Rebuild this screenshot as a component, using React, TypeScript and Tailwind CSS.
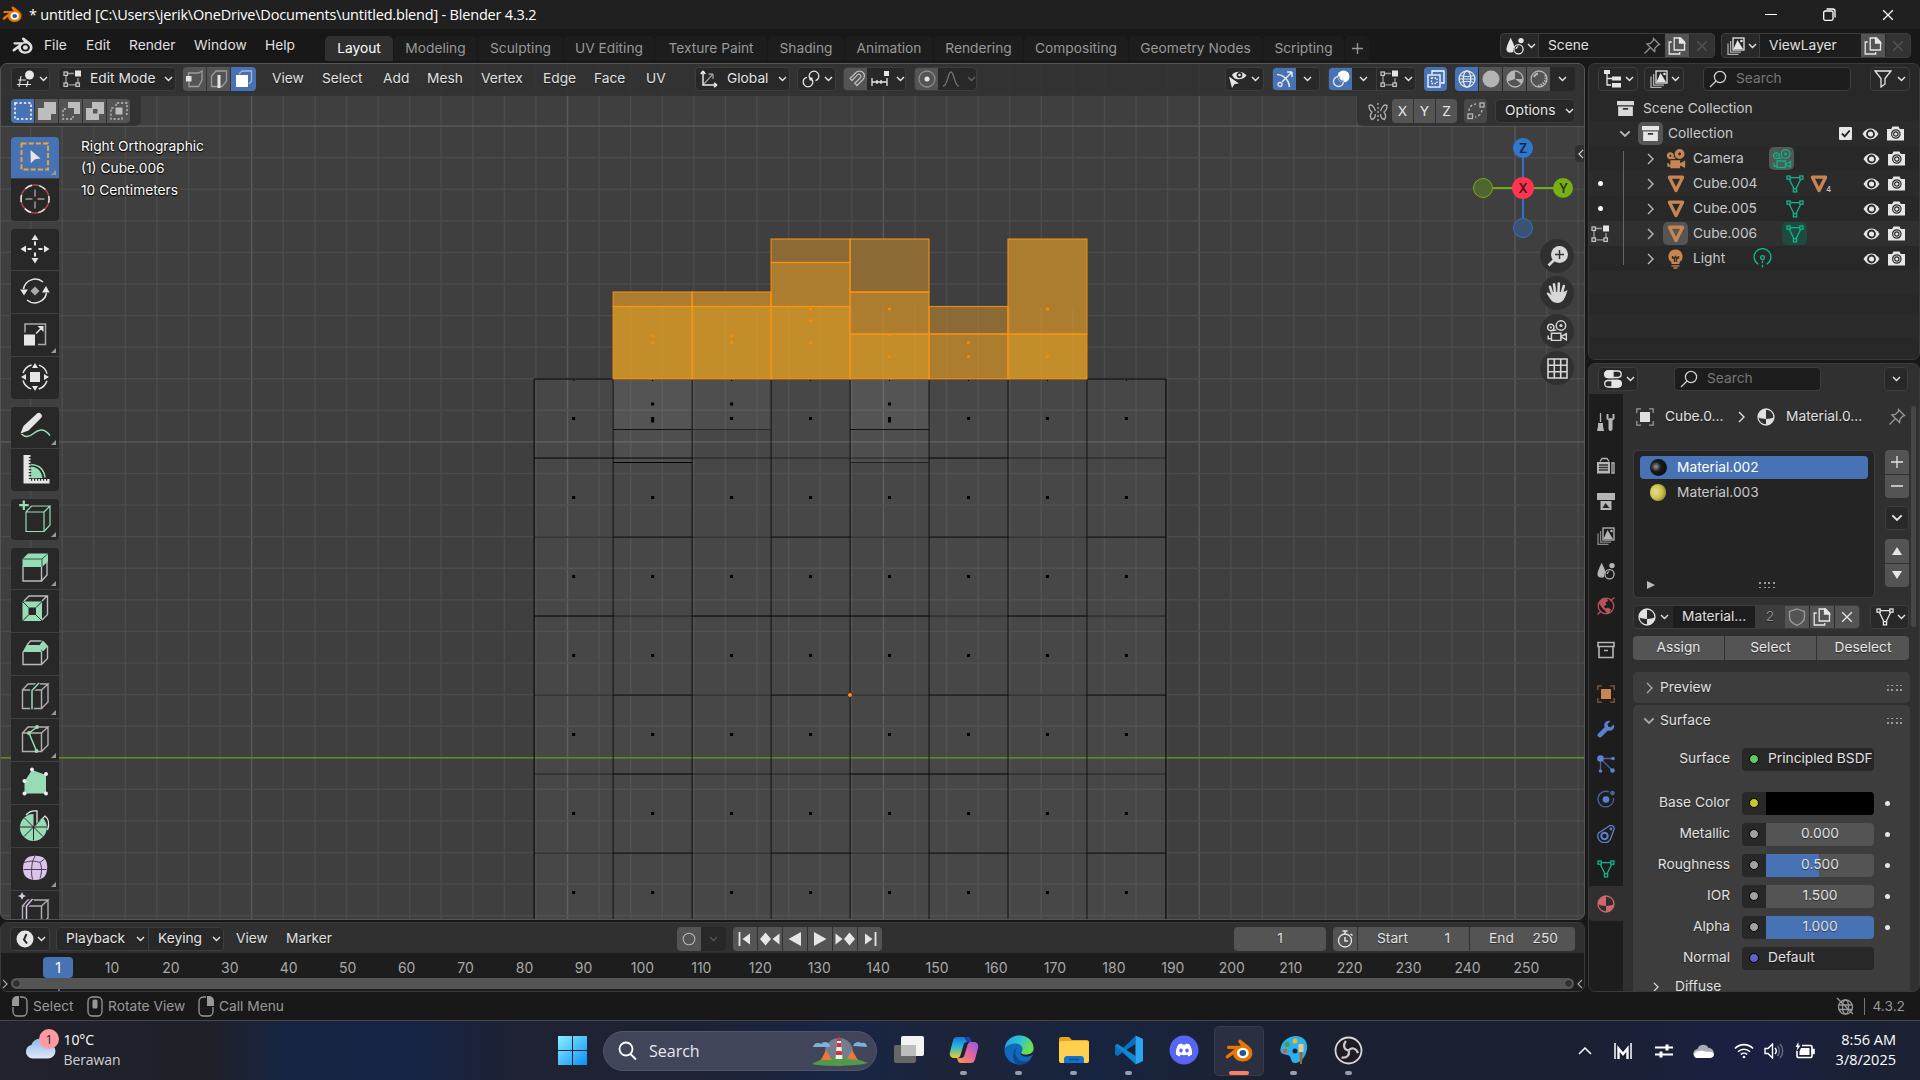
import React from "react";

type IconProps = { children: React.ReactNode; w?: number; h?: number; vb?: string; className?: string };

/* ---------- icon primitives ---------- */
const Icon = ({ children, w = 18, h, vb, className = "" }: IconProps) => (
  <svg
    width={w}
    height={h ?? w}
    viewBox={vb ?? `0 0 18 18`}
    fill="none"
    stroke="currentColor"
    strokeWidth="1.3"
    className={`shrink-0 ${className}`}
  >
    {children}
  </svg>
);

const Chev = ({ className = "" }: { className?: string }) => (
  <svg width="9" height="6" viewBox="0 0 9 6" fill="none" stroke="currentColor" strokeWidth="1.4" className={`shrink-0 ${className}`}>
    <path d="M1 1l3.5 3.5L8 1" />
  </svg>
);
const ChevRight = ({ className = "" }: { className?: string }) => (
  <svg width="7" height="12" viewBox="0 0 7 12" fill="none" stroke="currentColor" strokeWidth="1.4" className={`shrink-0 ${className}`}>
    <path d="M1 1l5 5-5 5" />
  </svg>
);

const EditMesh = () => (
  <Icon>
    <path d="M4.5 3.5H11M3 5.5V13M5.5 14.8H13M15 8v5" className="opacity-60" />
    <rect x="1" y="2" width="3.4" height="3.4" className="opacity-80" />
    <rect x="1" y="13" width="3.4" height="3.4" className="opacity-80" />
    <rect x="13" y="13" width="3.4" height="3.4" className="opacity-80" />
    <rect x="12" y="0.5" width="6" height="6" fill="currentColor" stroke="none" />
  </Icon>
);
const Copy = () => (
  <Icon>
    <path d="M6.2 1h6.3l4 4v8H6.2z" />
    <path d="M11.5 1v5h5z" fill="currentColor" />
    <path d="M3.8 5H1.2v12h10.5v-2" />
  </Icon>
);
const Cross = ({ className = "" }: { className?: string }) => (
  <Icon w={12} vb="0 0 12 12" className={className}>
    <path d="M1.2 1.2l9.6 9.6M10.8 1.2l-9.6 9.6" />
  </Icon>
);
const Pin = () => (
  <Icon className="opacity-60">
    <path d="M10.5 1.5l6 6-1.5.6-3 3-.4 3.4-7.6-7.6 3.4-.4 3-3zM7.5 10.5L1.5 16.5" />
  </Icon>
);
const SearchIcon = () => (
  <Icon>
    <circle cx="11" cy="7" r="5.6" />
    <path d="M7 11l-6 6" />
  </Icon>
);
const SceneIcon = () => (
  <Icon>
    <path d="M4.6.8C5.6 3 8.5 7.5 8 10.5a5.5 5.5 0 0 0-.8 4.4C5.2 16 2 15.6.9 14-.2 12 .8 9 4.6.8z" fill="currentColor" stroke="none" />
    <circle cx="15" cy="3.6" r="2.7" fill="currentColor" stroke="none" />
    <circle cx="12.5" cy="12.3" r="4.6" />
    <path d="M10 12a2.5 2.5 0 0 1 2.2-2.3" />
  </Icon>
);
const LayersIcon = () => (
  <Icon>
    <rect x="6" y="1" width="11" height="12" />
    <path d="M6.5 12l4-9 5.5 9z" fill="currentColor" stroke="none" />
    <circle cx="14.5" cy="4" r="1.3" fill="currentColor" stroke="none" />
    <path d="M3.6 4v11.2H14M1 6.5v11h10.5" className="opacity-70" />
  </Icon>
);
const MaterialIcon = ({ className = "" }: { className?: string }) => (
  <Icon className={className}>
    <circle cx="9" cy="9" r="8" />
    <path d="M9 1a8 8 0 0 0-8 8c2 1.4 5 1.9 8 1.9zM9 10.9c3 0 6-.5 8-1.9a8 8 0 0 1-8 8z" fill="currentColor" stroke="none" />
  </Icon>
);
const MeshData = ({ className = "" }: { className?: string }) => (
  <Icon className={className}>
    <path d="M4 2.6h10M3.4 4.5L8 13.7M14.6 4.5L10 13.7" />
    <rect x="1" y="1" width="3.2" height="3.2" />
    <rect x="13.8" y="1" width="3.2" height="3.2" />
    <rect x="7.4" y="13.7" width="3.2" height="3.2" />
  </Icon>
);
const ObjTri = () => (
  <Icon className="text-[#c88551]">
    <path d="M2.4 2.2h13.2L9 15.6z" strokeWidth="3.3" strokeLinejoin="round" />
  </Icon>
);
const MovieCam = ({ filled = false, w = 20 }: { filled?: boolean; w?: number }) => (
  <Icon w={w} vb="0 0 20 20">
    <circle cx="4.4" cy="6.8" r="2.9" fill={filled ? "currentColor" : "none"} />
    <circle cx="13.6" cy="5" r="4.3" fill={filled ? "currentColor" : "none"} />
    <circle cx="4.4" cy="6.8" r="1" fill={filled ? "#282828" : "currentColor"} stroke="none" />
    <circle cx="13.6" cy="5" r="1.4" fill={filled ? "#282828" : "currentColor"} stroke="none" />
    <path d="M5 12h8.5v6.5H5zM2 14v3h3M13.5 15.2l5-2.7v5.5l-5-2.6M6.5 9.5L9.5 9" fill={filled ? "currentColor" : "none"} />
  </Icon>
);
const Eye = () => (
  <Icon w={17} h={12} vb="0 0 17 12">
    <path d="M.5 6C3 2 5.5.6 8.5.6S14 2 16.5 6c-2.5 4-5 5.4-8 5.4S3 10 .5 6z" fill="currentColor" stroke="none" />
    <circle cx="8.5" cy="6" r="3.500" fill="currentColor" stroke="#282828" strokeWidth="1.800" />
  </Icon>
);
const RenderCam = () => (
  <Icon w={17} h={15} vb="0 0 17 15">
    <path d="M0 3h4.2L5.500.5h6L12.800 3H17v11.500H0z" fill="currentColor" stroke="none" />
    <circle cx="8.800" cy="8" r="4.200" stroke="#2a2a2a" strokeWidth="1.200" />
    <circle cx="8.800" cy="8" r="2.200" stroke="#2a2a2a" strokeWidth="1.200" />
  </Icon>
);
const ArchiveIcon = () => (
  <Icon w={17} vb="0 0 18 18">
    <path d="M0 1h18v4.600H0zM1.200 6.800h15.600V17H1.200z" fill="currentColor" stroke="none" />
    <path d="M6.200 9.400h5.600" stroke="#333" strokeWidth="2" />
  </Icon>
);
const Wrench = ({ className = "" }: { className?: string }) => (
  <Icon className={className}>
    <path d="M16.800 4.400l-3 2.900-2.600-.6-.7-2.600L13.400 1C10.800.3 8 1.500 7.400 4.200c-.3 1.200-.1 2.200.3 3L1.300 13.400a2.300 2.300 0 0 0 3.300 3.300l6.300-6.300c3.700 1.200 7.500-1.500 5.900-6z" fill="currentColor" stroke="none" />
  </Icon>
);
const BlenderMark = ({ w, color, eye, ring }: { w: number; color: string; eye: string; ring: string }) => (
  <svg width={w} height={(w * 18) / 22} viewBox="0 0 22 18" className="shrink-0">
    <path d="M11.200.6c.6-.4 1.400.1 1.900.5l6.200 5a7.300 6.700 0 0 1 2.200 5c0 3.900-3.500 6.500-7.600 6.500-3.900 0-7-2.300-7.400-5.500L3 14.800c-.9.7-1.800.5-2.200-.1-.5-.7-.2-1.400.5-2l6.300-4.900H2.800C1.900 7.800 1.500 7.200 1.500 6.600s.5-1.200 1.300-1.200h8.900l.8-.3L10.900 3c-.8-.7-.4-1.900.3-2.400z" fill={color} />
    <ellipse cx="14" cy="11" rx="4.700" ry="4.200" fill={ring} />
    <ellipse cx="14" cy="11" rx="2.600" ry="2.300" fill={eye} />
  </svg>
);

/* ---------- small building blocks ---------- */
const menuText = "text-[13.75px] leading-none text-[#e0e0e0] whitespace-nowrap [text-shadow:0_1px_1px_rgba(0,0,0,0.5)]";
const btn = "flex h-6 shrink-0 items-center rounded-[4px] border border-[#3d3d3d] bg-[#282828] text-[#e6e6e6]";

const Item = ({ w, children }: { w: string; children: React.ReactNode }) => <div className={`${w} shrink-0 ${menuText}`}>{children}</div>;

/* ---------- title bar ---------- */
const TitleBar = () => (
  <div className="flex h-[29px] items-center bg-[#202020] pl-[2px] text-white">
    <BlenderMark w={20} color="#ea7600" ring="#fff" eye="#265787" />
    <span className="ml-[7px] w-[1729px] font-['Open_Sans',sans-serif] text-[14.500px] tracking-[-0.190px]">
      * untitled [C:\Users\jerik\OneDrive\Documents\untitled.blend] - Blender 4.3.2
    </span>
    <div className="ml-[7px] h-px w-3 bg-white" />
    <Icon w={13} vb="0 0 13 13" className="ml-[46px]">
      <rect x="0.700" y="3" width="9.300" height="9.300" rx="1.500" />
      <path d="M3.500 1h6.300a2.200 2.200 0 0 1 2.200 2.200v6.300" />
    </Icon>
    <Cross className="ml-[46px]" />
  </div>
);

/* ---------- top menu bar ---------- */
const tabs: [string, string][] = [
  ["Modeling", "w-[84px]"],
  ["Sculpting", "w-[86px]"],
  ["UV Editing", "w-[91px]"],
  ["Texture Paint", "w-[113px]"],
  ["Shading", "w-[77px]"],
  ["Animation", "w-[89px]"],
  ["Rendering", "w-[90px]"],
  ["Compositing", "w-[105px]"],
  ["Geometry Nodes", "w-[134px]"],
  ["Scripting", "w-[82px]"],
];

const IdSelector = ({ icon, name, nameW, pin }: { icon: React.ReactNode; name: string; nameW: string; pin?: boolean }) => (
  <div className="flex h-[25px] overflow-hidden rounded-[4px] border border-[#3d3d3d] bg-[#282828] text-[#e6e6e6]">
    <div className="flex w-[38px] items-center gap-[3px] border-r border-[#3d3d3d] pl-[5px]">
      {icon}
      <Chev />
    </div>
    <div className={`flex items-center justify-between bg-[#1d1d1d] pl-[9px] pr-1 ${nameW} ${menuText}`}>
      {name}
      {pin && <Pin />}
    </div>
    <div className="flex w-6 items-center justify-center bg-[#545454]">
      <Copy />
    </div>
    <div className="ml-px flex w-6 items-center justify-center bg-[#333] text-[#555]">
      <Cross />
    </div>
  </div>
);

const MenuBar = () => (
  <div className="flex h-[34px] items-start bg-[#181818]">
    <div className="flex h-8 w-[325px] items-center pl-3 pt-px">
      <div className="w-8">
        <BlenderMark w={21} color="#e0e0e0" ring="#181818" eye="#e0e0e0" />
      </div>
      <Item w="w-[42px]">File</Item>
      <Item w="w-[43px]">Edit</Item>
      <Item w="w-[65px]">Render</Item>
      <Item w="w-[71px]">Window</Item>
      <Item w="w-[50px]">Help</Item>
    </div>
    <div className="mt-[7px] flex h-[25px] w-[1175px] text-[13.75px] text-[#989898]">
      <div className="flex w-[68px] items-center justify-center rounded-t-[5px] bg-[#303030] text-white">Layout</div>
      {tabs.map(([t, w]) => (
        <div key={t} className={`flex items-center justify-center whitespace-nowrap rounded-t-[5px] border-l border-[#181818] bg-[#1d1d1d] ${w}`}>
          {t}
        </div>
      ))}
      <div className="flex w-[25px] items-center justify-center rounded-t-[5px] border-l border-[#181818] bg-[#1d1d1d]">
        <Icon w={11} vb="0 0 11 11">
          <path d="M5.500 0v11M0 5.500h11" />
        </Icon>
      </div>
    </div>
    <div className="mt-1 flex gap-[6px]">
      <IdSelector icon={<SceneIcon />} name="Scene" nameW="w-[126px]" pin />
      <IdSelector icon={<LayersIcon />} name="ViewLayer" nameW="w-[101px]" />
    </div>
  </div>
);

/* ---------- viewport drawing ---------- */
const STEP = 31.584;
const COL = 78.96;
const X0 = 534.2;
const Y0 = 379;
const cx = (c: number) => X0 + c * COL;

type Q = [number, number, number, string];
const tinted: Q[] = [
  [1, 292, 306.5, "#ad7d2f"], [1, 306.5, 379, "#c38d29"],
  [2, 292, 306.5, "#ad7d2f"], [2, 306.5, 379, "#c38d29"],
  [3, 239, 262.5, "#8b6a35"], [3, 262.5, 306.5, "#ad7d2f"], [3, 306.5, 379, "#c38d29"],
  [4, 239, 292, "#8b6a35"], [4, 292, 334, "#ad7d2f"], [4, 334, 379, "#c38d29"],
  [5, 306.5, 334, "#8b6a35"], [5, 334, 379, "#ad7d2f"],
  [6, 239, 334, "#ad7d2f"], [6, 334, 379, "#c38d29"],
];
const orangeDots: [number, number][] = [
  [1, 336], [1, 342.5], [2, 336], [2, 342.5], [3, 309], [3, 320.5], [3, 342.5],
  [4, 309], [4, 335], [4, 356.5], [5, 342.5], [5, 356.5], [6, 309], [6, 356.5],
];
const darkDots: [number, number][] = [[1, 404], [2, 404], [4, 404], [1, 421], [4, 421]];
/* strong[r] lists the columns whose edge on row r is drawn darker */
const strong: number[][] = [[0, 1, 2, 3, 4, 5, 6, 7], [0, 1, 5], [1, 3, 5, 7], [0, 2, 3, 4, 6], [1, 3, 5, 7], [1, 4, 5], [1, 3, 5, 7]];

const ViewportCanvas = () => {
  const xs = Array.from({ length: 52 }, (_, i) => i - 28);
  const ys = Array.from({ length: 29 }, (_, i) => i - 22);
  return (
    <svg className="absolute -left-px -top-px" width="1584" height="857" viewBox="0 63 1584 857">
      <rect x="0" y="63" width="1584" height="857" fill="#3f3f3f" />
      {xs.map((k) => (
        <rect key={k} x={883.3 + k * STEP - 0.7} y="63" width="1.5" height="857" fill={k % 10 === 0 ? "#585858" : "#4b4b4b"} />
      ))}
      {ys.map((k) => (
        <rect key={k} x="0" y={757.7 + k * STEP - 0.7} width="1584" height="1.5" fill={k % 10 === 0 ? "#585858" : "#4b4b4b"} />
      ))}
      <rect x={X0} y={Y0} width={COL * 8} height="541" fill="#fff" fillOpacity="0.045" />
      <rect x={cx(1)} y={Y0} width={COL} height="50.5" fill="#fff" fillOpacity="0.07" />
      <rect x={cx(1)} y="429.5" width={COL} height="33" fill="#fff" fillOpacity="0.04" />
      <rect x={cx(2)} y={Y0} width={COL} height="50.5" fill="#fff" fillOpacity="0.04" />
      <rect x={cx(4)} y={Y0} width={COL} height="50.5" fill="#fff" fillOpacity="0.07" />
      <rect x={cx(4)} y="429.5" width={COL} height="33" fill="#fff" fillOpacity="0.04" />
      <rect x="0" y="757" width="1584" height="1.5" fill="#5f8a1e" />
      {Array.from({ length: 9 }, (_, c) => (
        <rect key={c} x={cx(c) - 0.7} y={Y0} width="1.5" height="541" fill="#000" fillOpacity={c === 0 || c === 8 ? 0.65 : 0.5} />
      ))}
      {strong.map((cols, r) =>
        Array.from({ length: 8 }, (_, c) => (
          <rect key={`${r}-${c}`} x={cx(c)} y={Y0 + r * 79 - 0.7} width={COL} height="1.5" fill="#000" fillOpacity={cols.includes(c) ? 0.65 : 0.35} />
        )),
      )}
      <rect x={cx(1)} y="429" width={COL} height="1" fill="#111" />
      <rect x={cx(2)} y="429" width={COL} height="1" fill="#2a2a2a" />
      <rect x={cx(4)} y="429" width={COL} height="1" fill="#111" />
      <rect x={cx(1)} y="462" width={COL} height="1" fill="#000" />
      <rect x={cx(4)} y="462" width={COL} height="1" fill="#222" />
      {Array.from({ length: 7 }, (_, r) =>
        Array.from({ length: 8 }, (_, c) => (
          <rect key={`d${r}-${c}`} x={cx(c) + COL / 2 - 1.5} y={Y0 + 38 + r * 79} width="3" height="3" fill="#000" />
        )),
      )}
      {Array.from({ length: 8 }, (_, c) => (
        <rect key={c} x={cx(c) + COL / 2 - 0.5} y="380" width="1" height="1" fill="#000" />
      ))}
      {darkDots.map(([c, y], i) => (
        <rect key={i} x={cx(c) + COL / 2 - 1.5} y={y - 1.5} width="3" height="3" fill="#000" />
      ))}
      {tinted.map(([c, a, b, f], i) => (
        <rect key={i} x={cx(c)} y={a} width={COL} height={b - a} fill={f} />
      ))}
      <g fill="#fff" fillOpacity="0.04">
        {xs.filter((k) => k > -9 && k < 7).map((k) => (
          <rect key={k} x={883.3 + k * STEP - 0.7} y="307" width="1.5" height="72" />
        ))}
      </g>
      {tinted.map(([c, a, b], i) => (
        <rect key={i} x={cx(c)} y={a} width={COL} height={b - a} fill="none" stroke="#ff9410" strokeWidth="1.2" strokeOpacity="0.85" />
      ))}
      {orangeDots.map(([c, y], i) => (
        <rect key={i} x={cx(c) + COL / 2 - 1.5} y={y - 1.2} width="3" height="2.5" fill="#ff8a00" />
      ))}
      <circle cx="850" cy="695" r="2.5" fill="#ff8c1a" stroke="#222" strokeWidth="0.8" />
    </svg>
  );
};

/* ---------- tool shelf ---------- */
const G = "#97dcb4";
const cube = (
  <path d="M1.5 7h19v18.5h-19zM1.5 7l5.5-6h20l-6.5 6M27 1v18l-6.5 6.5" stroke="#b0b0b0" strokeWidth="1.4" />
);
const T = ({ children }: { children: React.ReactNode }) => (
  <svg width="30" height="30" viewBox="0 0 30 30" fill="none" stroke="#e6e6e6" strokeWidth="1.5">
    {children}
  </svg>
);
const tri = (d: string, f = "#e6e6e6") => <path d={d} fill={f} stroke="none" />;

const icons: Record<string, React.ReactNode> = {
  select: (
    <T>
      <rect x="1.5" y="1.5" width="26.5" height="26" stroke="#e8a838" strokeWidth="1.9" strokeDasharray="5 2.2" />
      {tri("M10.5 8l10 8.500-5.500.8-4.200 4z")}
    </T>
  ),
  cursor: (
    <T>
      <circle cx="15" cy="15" r="14" stroke="#a84a4e" />
      <circle cx="15" cy="15" r="14" strokeDasharray="7.33 7.33" strokeDashoffset="3.5" />
      <path d="M15 5.500v7M15 17.500v7M5.500 15h7M17.500 15h7" stroke="#999" />
    </T>
  ),
  move: (
    <T>
      {tri("M15 .5l3.500 5.500h-7zM15 29.500l3.500-5.500h-7zM.5 15L6 11.500v7zM29.500 15L24 11.500v7z")}
      <path d="M15 7.500v4M15 18.500v4M7.500 15h4M18.500 15h4" strokeWidth="2" />
    </T>
  ),
  rotate: (
    <T>
      <path d="M3.500 13A12 12 0 0 1 23 6M26.500 17A12 12 0 0 1 7 24" />
      {tri("M.2 13.500h7.600L4 19.500zM22 16.500h7.600L26 10z")}
      {tri("M15 10.500l4.500 4.500-4.500 4.500-4.500-4.500z", "#aaa")}
    </T>
  ),
  scale: (
    <T>
      <path d="M5 13.500V5h20.500v20.500H18" stroke="#aaa" />
      <path d="M16 14.500l5-5" />
      {tri("M4 15.500h11v11H4zM23.500 7v6l-6-6z")}
    </T>
  ),
  transform: (
    <T>
      <circle cx="15" cy="15" r="12.500" strokeDasharray="12 7.600" strokeDashoffset="-3.800" />
      {tri("M10 10h10v10H10zM15 1l3 5h-6zM15 29l3-5h-6zM1 15l5-3v6zM29 15l-5-3v6z")}
    </T>
  ),
  annotate: (
    <T>
      <path d="M1.500 22c4 4 8 3 12-.5s10-6.500 16.500 2" stroke={G} />
      {tri("M.5 21.500l3-7.500L16.500 2a2.600 2.600 0 0 1 4.500 4L8.500 18.500z")}
    </T>
  ),
  measure: (
    <T>
      {tri("M10.500 12.500c7 0 11 5 12 11.500l-12 .5z", G)}
      <path d="M11 10.500c8 .5 13 5 14 13" stroke={G} />
      {tri("M3.500 1h7v24h19v4.500h-26z")}
      <path d="M10 3v22M11 25.500h17" stroke="#282828" strokeWidth="2.500" strokeDasharray="1.200 1.800" />
    </T>
  ),
  add: (
    <T>
      <path d="M6 8h18v19.500H6zM6 8l5.500-6H30l-6 6M30 2v19l-6 6.500" stroke={G} strokeWidth="1.200" />
      <path d="M3.800-3.500v9.500M-.8 1.200h9.500" stroke={G} strokeWidth="2.200" />
    </T>
  ),
  extrude: (
    <T>
      <path d="M3 13v15h18.500V13M21.500 28l5.500-6V9" stroke="#bbb" strokeWidth="1.400" />
      {tri("M2.500 6L8 .5h20v8L22 14H2.500z", G)}
      <path d="M3 6h19M22 6l6-5.500M22 6v8" stroke="#2f5a43" strokeWidth="1" />
    </T>
  ),
  inset: (
    <T>
      <path d="M4 6l5-5h18.500v18.500L22 25M22 6l5-5" stroke="#bbb" strokeWidth="1.400" />
      <path d="M2.500 6.500h19.500v19.500H2.500zM8.500 12.500v7.500h7.500v-7.500z" fill={G} fillRule="evenodd" stroke="none" />
      <path d="M2.500 6.500l6 6M22 6.500l-6 6M2.500 26l6-6M22 26l-6-6" stroke="#282828" strokeWidth="1" />
    </T>
  ),
  bevel: (
    <T>
      <path d="M3 14v12.500h18.500V14M21.500 26.500l6-6V8M7 7l3.500-4h11" stroke="#bbb" strokeWidth="1.400" />
      {tri("M6.500 7H19l3 7H2.500zM23 2.500l5 5.500-5 5.500-4.500-5z", G)}
    </T>
  ),
  loopcut: (
    <T>
      <g transform="translate(1 2)">{cube}</g>
      <path d="M12 28V9.500L19 2" stroke="#282828" strokeWidth="4" />
      <path d="M12 28V9.500L19 2" stroke={G} />
    </T>
  ),
  knife: (
    <T>
      <g transform="translate(1 2)">{cube}</g>
      <path d="M17 3L9 9l7.500 18" stroke={G} />
      <circle cx="17" cy="3" r="2" fill={G} stroke="none" />
      <circle cx="9" cy="9" r="2" fill={G} stroke="none" />
      <circle cx="16.500" cy="27" r="2" fill={G} stroke="none" />
    </T>
  ),
  poly: (
    <T>
      {tri("M12 3l14 5v18.500H4.500V14.500z", G)}
      {([[12, 2.5], [26, 7], [4.5, 14], [4.5, 26.5], [26, 26.5]] as [number, number][]).map(([x, y]) => (
        <circle key={`${x}-${y}`} cx={x} cy={y} r="2" fill="#eee" stroke="none" />
      ))}
    </T>
  ),
  spin: (
    <T>
      <path d="M6 5c3-3.500 7-4.500 11-4v13l8-8c4 3 4.500 8 2.500 14" strokeWidth="1.300" />
      {tri("M13.500 17V4a13.500 13.500 0 1 0 9.500 4z", G)}
      <path d="M13.500 17v13.500M0 17h27M4 7.500l19 19M4 26.500L20 10.500" stroke="#282828" strokeWidth="1" />
    </T>
  ),
  smooth: (
    <T>
      {tri("M6 6c3-4 15-4.500 19 0 3 4 3 12 0 17-4 5-14 5-19 1-4-4-4-13 0-18z", "#dcc3ea")}
      <path d="M3.500 16.500h23M12.500 26.500c-1.500-6-1-12 0-18M4 9.500c6-2 12-1.500 16 0 2 4 2 10 0 16M20 9.500l5-4M12.500 8.500L15 3" stroke="#4a4050" strokeWidth="1" />
    </T>
  ),
  slide: (
    <T>
      <g transform="translate(1 3)">{cube}</g>
      <path d="M6.500 30V10l6-7" stroke="#282828" strokeWidth="4" />
      <path d="M6.500 30V10l6-7" stroke="#dcc3ea" />
      {tri("M2-4l1.300 2.700L6 0 3.300 1.300 2 4 .7 1.300-2 0l2.700-1.300z", "#dcc3ea")}
    </T>
  ),
};

const toolGroups: { mt: string; tools: [string, boolean][] }[] = [
  { mt: "mt-[11px]", tools: [["select", true], ["cursor", false]] },
  { mt: "mt-2", tools: [["move", false], ["rotate", false], ["scale", true], ["transform", false]] },
  { mt: "mt-2", tools: [["annotate", true], ["measure", false]] },
  { mt: "mt-2", tools: [["add", true]] },
  {
    mt: "mt-2",
    tools: [["extrude", true], ["inset", false], ["bevel", false], ["loopcut", true], ["knife", true], ["poly", false], ["spin", false], ["smooth", true], ["slide", false]],
  },
];

const ToolShelf = () => (
  <div className="ml-[11px] w-12">
    {toolGroups.map((g, gi) => (
      <div key={gi} className={`flex flex-col gap-px overflow-hidden rounded-[4px] bg-[#3f3f3f] ${g.mt}`}>
        {g.tools.map(([name, more], i) => (
          <div key={name} className={`relative flex items-center justify-center pb-[2px] ${i === 0 ? "h-[41px]" : "h-[42px]"} ${name === "select" ? "bg-[#4772b3]" : "bg-[#282828]"}`}>
            <div className="[&>svg]:overflow-visible">{icons[name]}</div>
            {more && <div className="absolute bottom-[3px] right-[3px] border-b-[5px] border-l-[5px] border-b-[#999] border-l-transparent" />}
          </div>
        ))}
      </div>
    ))}
  </div>
);

/* ---------- viewport header ---------- */
const seg = "flex h-full w-[23px] shrink-0 items-center justify-center";

const HeaderTop = () => (
  <div className="flex h-[33px] items-center bg-[#303030]/85 pl-[11px] pb-[3px] pt-px">
    <div className={`${btn} w-[39px] gap-1 pl-[5px]`}>
      <Icon>
        <path d="M4 6L2 17M11 11l-1.500 6M1 10h8M0 14.500h14" strokeWidth="1.100" />
        <circle cx="12.500" cy="5" r="4.500" fill="currentColor" stroke="none" />
      </Icon>
      <Chev />
    </div>
    <div className={`${btn} ml-2 w-[118px] pl-1 ${menuText}`}>
      <EditMesh />
      <span className="ml-[9px] w-[74px]">Edit Mode</span>
      <Chev />
    </div>
    <div className="ml-[7px] flex h-6 w-[73px] gap-px overflow-hidden rounded-[4px] text-[#e6e6e6]">
      <div className={`${seg} bg-[#545454]`}>
        <Icon><path d="M2.500 6.500V3h10l3.500-2v9l-3.500 6.500H3V12" className="opacity-50" /><rect x="0" y="6" width="5.500" height="5.500" fill="currentColor" stroke="none" /></Icon>
      </div>
      <div className={`${seg} bg-[#545454]`}>
        <Icon><path d="M1.500 16.500V6l4.500-5h10.500v10L12 16.500z" className="opacity-50" /><rect x="7.500" y="5" width="3" height="13" fill="currentColor" stroke="none" /></Icon>
      </div>
      <div className={`${seg} !w-[25px] bg-[#4772b3]`}>
        <Icon><path d="M4 4l3-3h9.500v10L14 14" className="opacity-60" /><rect x="1" y="5" width="12" height="12" fill="#fff" stroke="none" /></Icon>
      </div>
    </div>
    <div className="ml-4 flex">
      <Item w="w-[50px]">View</Item>
      <Item w="w-[61px]">Select</Item>
      <Item w="w-[44px]">Add</Item>
      <Item w="w-[54px]">Mesh</Item>
      <Item w="w-[62px]">Vertex</Item>
      <Item w="w-[51px]">Edge</Item>
      <Item w="w-[52px]">Face</Item>
      <Item w="w-[49px]">UV</Item>
    </div>
    <div className={`${btn} w-[95px] pl-1 ${menuText}`}>
      <Icon>
        <path d="M3 1v14h14M3 1L.8 4M3 1l2.200 3M17 15l-3-2.200M17 15l-3 2.200" strokeWidth="1.500" />
        <path d="M3 15L13 4M13 4H8.500M13 4v5" className="opacity-60" />
      </Icon>
      <span className="ml-[9px] w-[51px]">Global</span>
      <Chev />
    </div>
    <div className={`${btn} ml-[7px] w-[39px] gap-1 pl-1`}>
      <Icon>
        <circle cx="12" cy="6" r="4.800" strokeDasharray="24 6.200" strokeDashoffset="-12" />
        <circle cx="6" cy="12" r="4.800" strokeDasharray="24 6.200" strokeDashoffset="3" />
        <circle cx="9" cy="9" r="1.700" fill="currentColor" stroke="none" />
      </Icon>
      <Chev />
    </div>
    <div className={`${btn} ml-[7px] w-[63px] overflow-hidden`}>
      <div className={`${seg} bg-[#545454] text-[#bbb]`}>
        <Icon>
          <path d="M3 8.500l6-6a4.800 4.800 0 0 1 7 7l-6 6-2.200-2.200 5.500-5.500a2 2 0 0 0-2.900-2.900L5 10.500z" />
        </Icon>
      </div>
      <Icon className="ml-1"><path d="M1 8v8M6 10v4M10 10v4M16 8v8M1 12h15" /><rect x="13" y="1" width="5" height="5" fill="currentColor" stroke="none" /></Icon>
      <Chev className="ml-[7px]" />
    </div>
    <div className={`${btn} ml-2 w-[63px] overflow-hidden`}>
      <div className={`${seg} bg-[#545454]`}>
        <Icon><circle cx="9" cy="9" r="8" className="opacity-40" /><circle cx="9" cy="9" r="2.500" fill="currentColor" stroke="none" /></Icon>
      </div>
      <Icon className="ml-1 opacity-40"><path d="M1 16c5 0 4.500-14 8-14s3 14 8 14" /></Icon>
      <Chev className="ml-[7px] opacity-30" />
    </div>

    <div className={`${btn} ml-[248px] w-[39px] gap-1 pl-[3px]`}>
      <Icon>
        <path d="M3 5c3-4.500 11-4.500 14.500.5C14 10 8 10 5 8z" fill="currentColor" stroke="none" />
        <circle cx="10.500" cy="5" r="2.300" fill="#282828" stroke="#282828" /><circle cx="10.500" cy="5" r="1.300" fill="currentColor" stroke="none" />
        <path d="M0 6.500l10 7-4.500.6L3 18z" fill="currentColor" stroke="none" />
      </Icon>
      <Chev />
    </div>
    <div className={`${btn} ml-2 w-[48px] overflow-hidden`}>
      <div className={`${seg} bg-[#4772b3]`}>
        <Icon><path d="M1 4.500C8 5 13 10 13.500 17M6 12L16 2M16 2h-5M16 2v5" strokeWidth="1.500" /><circle cx="4" cy="14.500" r="2" /></Icon>
      </div>
      <Chev className="ml-[7px]" />
    </div>
    <div className={`${btn} ml-2 w-[88px] overflow-hidden`}>
      <div className={`${seg} bg-[#4772b3]`}>
        <Icon><circle cx="11.500" cy="6.500" r="6" fill="#fff" stroke="none" /><circle cx="6.500" cy="11.500" r="5" /><path d="M6.500 6.500a5 5 0 0 0 5 5" stroke="#4772b3" /></Icon>
      </div>
      <Chev className="ml-[7px]" />
      <div className="ml-2 flex h-full items-center gap-[6px] border-l border-[#3d3d3d] pl-[3px]">
        <EditMesh />
        <Chev />
      </div>
    </div>
    <div className="ml-2 flex h-6 w-[23px] items-center justify-center rounded-[4px] bg-[#4772b3] text-white">
      <Icon><rect x="1" y="5" width="12" height="12" /><path d="M5 4V1h12v12h-3" /><rect x="4.500" y="8" width="5.500" height="5.500" strokeDasharray="1.500 1.500" /></Icon>
    </div>
    <div className="ml-2 flex h-6 w-[120px] gap-px overflow-hidden rounded-[4px] bg-[#282828] text-[#e6e6e6]">
      <div className={`${seg} bg-[#4772b3]`}>
        <Icon><circle cx="9" cy="9" r="8" /><ellipse cx="9" cy="9" rx="3.800" ry="8" /><path d="M1 9h16M2 5.500c4 1.500 10 1.500 14 0M2 12.500c4-1.500 10-1.500 14 0" strokeWidth="1" /></Icon>
      </div>
      <div className={`${seg} bg-[#545454] text-[#b4b4b4]`}><Icon><circle cx="9" cy="9" r="8.500" fill="currentColor" stroke="none" /></Icon></div>
      <div className={`${seg} bg-[#545454] text-[#b4b4b4]`}>
        <Icon><circle cx="9" cy="9" r="8" /><path d="M9 1A8 8 0 0 0 1.500 11.500L9 9zM9 9l6.500 5A8 8 0 0 0 17 9z" fill="currentColor" stroke="none" /></Icon>
      </div>
      <div className={`${seg} bg-[#545454] text-[#b4b4b4]`}>
        <Icon><circle cx="9" cy="9" r="8" /><path d="M4 7a5.500 5.500 0 0 1 4-3.500" strokeWidth="2" /><path d="M15.500 5c1.500 5-2 10.500-8 11" strokeWidth="2.400" strokeDasharray="1.500 1.200" /></Icon>
      </div>
      <Chev className="ml-[7px] self-center" />
    </div>
  </div>
);

const opSeg = "flex h-6 w-[23px] items-center justify-center bg-[#545454] text-[#bdbdbd]";
const HeaderBottom = () => (
  <div className="flex h-[30px] justify-between">
    <div className="flex w-[141px] rounded-br-[6px] bg-[#303030]/85 pl-[11px] pt-[3px]">
      <div className="flex h-6 gap-px overflow-hidden rounded-[4px]">
        <div className={`${opSeg} !bg-[#4772b3] !text-white`}><Icon><rect x="1" y="1" width="16" height="16" strokeWidth="1.500" strokeDasharray="2.400 2" /></Icon></div>
        <div className={opSeg}><Icon><path d="M6 0h12v12h-5v6H0V6h6z" fill="currentColor" stroke="none" /></Icon></div>
        <div className={opSeg}><Icon><path d="M6 0h12v12h-6V6H6z" fill="currentColor" stroke="none" /><path d="M4 7H1v10h10v-3" strokeDasharray="2.200 1.800" /></Icon></div>
        <div className={opSeg}><Icon><path d="M6 0h12v12h-5v6H0V6h6zM7 7v4.500h4.500V7z" fillRule="evenodd" fill="currentColor" stroke="none" /></Icon></div>
        <div className={opSeg}><Icon><rect x="5.500" y="5.500" width="7" height="7" fill="currentColor" stroke="none" /><path d="M6 4V1h11v11h-3M3.500 6H1v11h11v-3" strokeDasharray="2.200 1.800" /></Icon></div>
      </div>
    </div>
    <div className="flex w-[227px] items-start rounded-bl-[6px] bg-[#303030]/85 pl-[11px] pt-[3px] text-[#e6e6e6]">
      <Icon w={20} vb="0 0 20 18" h={18} className="mt-1 opacity-70">
        <path d="M7.500 8C6 3 3 1 1 2.500c0 3 .5 5 3 6.500-2 2.500-2 5-.5 7.500C6 16 7.500 13.500 7.500 11M12.500 8c1.500-5 4.500-7 6.500-5.500 0 3-.5 5-3 6.500 2 2.500 2 5 .5 7.500-2.500-.5-4-3-4-5.500" />
        <path d="M10 0v18" strokeDasharray="2 2" />
      </Icon>
      <div className="ml-1 flex h-6 gap-px overflow-hidden rounded-[4px] text-[13.75px]">
        {["X", "Y", "Z"].map((a) => (
          <div key={a} className="flex w-[21px] items-center justify-center bg-[#545454]">{a}</div>
        ))}
      </div>
      <div className="ml-[7px] flex h-6 w-[23px] items-center justify-center rounded-[4px] bg-[#484848]">
        <Icon className="opacity-70"><rect x="1" y="12" width="4.500" height="4.500" /><rect x="13" y="1" width="4" height="4" /><path d="M2 9a7 7 0 0 1 7-7M15 8a8 8 0 0 1-7 7" strokeDasharray="2.500 2" /></Icon>
      </div>
      <div className={`${btn} ml-2 w-20 pl-[9px] ${menuText}`}><span className="w-[60px]">Options</span><Chev /></div>
    </div>
  </div>
);

/* ---------- gizmo + navigation ---------- */
const NavGizmo = () => (
  <svg className="absolute left-[1465px] top-[72px]" width="116" height="108" viewBox="1465 135 116 108" fontSize="12.500" fontWeight="600" textAnchor="middle">
    <path d="M1523 148v70" stroke="#2f74c9" strokeWidth="2" />
    <path d="M1493 188h70" stroke="#76ab15" strokeWidth="2" />
    <circle cx="1523" cy="148" r="10" fill="#3078cd" />
    <circle cx="1563" cy="188" r="10" fill="#78b013" />
    <circle cx="1483" cy="188" r="9.500" fill="#4f6630" stroke="#76ab15" />
    <circle cx="1523" cy="228" r="9.500" fill="#3c5273" stroke="#2f74c9" />
    <circle cx="1523" cy="188" r="11" fill="#fe3451" />
    <text x="1523" y="152.500" fill="#10253f">Z</text>
    <text x="1563.500" y="192.500" fill="#25360a">Y</text>
    <text x="1523" y="192.500" fill="#4e1019">X</text>
  </svg>
);

const navBtn = "flex h-[34px] w-[34px] items-center justify-center rounded-full bg-[#303030] text-[#d8d8d8]";
const NavButtons = () => (
  <div className="absolute left-[1540px] top-[176px] flex flex-col gap-[3px]">
    <div className={navBtn}>
      <Icon w={21} vb="0 0 21 21"><circle cx="12.500" cy="8.500" r="8.500" fill="currentColor" stroke="none" /><path d="M7 14L1.500 19.500" strokeWidth="2.600" /><path d="M12.500 4v9M8 8.500h9" stroke="#333" strokeWidth="1.500" /></Icon>
    </div>
    <div className={navBtn}>
      <Icon w={22} vb="0 0 22 22">
        <path d="M8 20.500C5 19 3 15 .8 11.800c-.4-1 .9-1.800 1.900-1.100L6 13.500" fill="currentColor" stroke="none" />
        <path d="M6 11L4 4.800M9 10L8 2.200M12.500 10l.3-8.400M15.800 11l2-7" strokeWidth="2.600" strokeLinecap="round" />
        <path d="M5 10h12c3-1 4-2.500 4.500-1.500C20 12 18.500 21 12 21S6 17 5 10z" fill="currentColor" stroke="none" />
      </Icon>
    </div>
    <div className={`${navBtn} mt-px`}><MovieCam w={22} /></div>
    <div className={navBtn}>
      <Icon w={21} vb="0 0 21 21"><path d="M1 1h19v19H1zM7.300 1v19M13.700 1v19M1 7.300h19M1 13.700h19" strokeWidth="1.600" /></Icon>
    </div>
  </div>
);

const Viewport = () => (
  <div className="relative h-[857px] w-[1585px] overflow-hidden rounded-[7px] border border-[#555] bg-[#3f3f3f]">
    <ViewportCanvas />
    <div className="relative -ml-px -mt-px">
      <HeaderTop />
      <HeaderBottom />
      <div className="flex">
        <ToolShelf />
        <div className="ml-[22px] mt-[9px] text-[13.75px] leading-[22px] text-white [text-shadow:0_0_2px_#000,0_1px_1px_#000]">
          <div>Right Orthographic</div>
          <div>(1) Cube.006</div>
          <div>10 Centimeters</div>
        </div>
      </div>
      <NavGizmo />
      <NavButtons />
      <div className="absolute left-[1575px] top-[82px] flex h-[17px] w-[11px] items-center justify-center rounded-l-[4px] bg-[#303030] text-[#ccc]">
        <ChevRight className="h-[10px] w-[6px] rotate-180" />
      </div>
    </div>
  </div>
);

/* ---------- timeline ---------- */
const pb = "flex h-full w-6 items-center justify-center bg-[#545454] text-[#e6e6e6]";
const frames = Array.from({ length: 25 }, (_, i) => (i + 1) * 10);
const Timeline = () => (
  <div className="mt-[2px] flex h-[70px] w-[1585px] flex-col overflow-hidden rounded-[7px] border border-[#3a3a3a] bg-[#1d1d1d]">
    <div className="flex h-[30px] shrink-0 items-center bg-[#303030] pl-[9px] pt-px">
      <div className={`${btn} w-[40px] gap-[3px] pl-[5px]`}>
        <Icon><circle cx="9" cy="9" r="8.500" fill="currentColor" stroke="none" /><path d="M10.500 4L8 9.500l3 4" stroke="#282828" strokeWidth="2" /></Icon>
        <Chev />
      </div>
      <div className={`${btn} ml-[6px] w-[168px] ${menuText}`}>
        <div className="flex h-full w-[92px] items-center border-r border-[#3d3d3d] pl-[9px]"><span className="w-[70px]">Playback</span><Chev /></div>
        <div className="flex items-center pl-[9px]"><span className="w-[54px]">Keying</span><Chev /></div>
      </div>
      <div className="ml-3 flex"><Item w="w-[50px]">View</Item><Item w="w-[50px]">Marker</Item></div>
      <div className="ml-[341px] flex h-6 w-[49px] overflow-hidden rounded-[4px] bg-[#282828] text-[#bbb]">
        <div className={pb}><Icon w={14}><circle cx="9" cy="9" r="7.500" className="opacity-70" /></Icon></div>
        <div className="flex flex-1 items-center justify-center text-[#555]"><Chev /></div>
      </div>
      <div className="ml-[7px] flex h-6 w-[149px] gap-px overflow-hidden rounded-[4px]">
        <div className={pb}><Icon w={14} vb="0 0 14 14"><path d="M1.500 0v14" strokeWidth="1.800" /><path d="M12 1.500v11L4.500 7z" fill="currentColor" stroke="none" /></Icon></div>
        <div className={pb}><Icon w={20} vb="0 0 20 14" h={14}><path d="M0 7l5.500-6.500L11 7l-5.500 6.500zM19.500 1.500v11L12.500 7z" fill="currentColor" stroke="none" /></Icon></div>
        <div className={pb}><Icon w={14} vb="0 0 14 14"><path d="M13 0v14L.5 7z" fill="currentColor" stroke="none" /></Icon></div>
        <div className={pb}><Icon w={14} vb="0 0 14 14"><path d="M1 0v14L13.500 7z" fill="currentColor" stroke="none" /></Icon></div>
        <div className={pb}><Icon w={20} vb="0 0 20 14" h={14}><path d="M20 7l-5.500-6.500L9 7l5.500 6.500zM.5 1.500v11L7.500 7z" fill="currentColor" stroke="none" /></Icon></div>
        <div className={pb}><Icon w={14} vb="0 0 14 14"><path d="M12.500 0v14" strokeWidth="1.800" /><path d="M2 1.500v11L9.500 7z" fill="currentColor" stroke="none" /></Icon></div>
      </div>
      <div className={`ml-[352px] flex h-6 w-[92px] items-center justify-center rounded-[4px] bg-[#545454] ${menuText}`}>1</div>
      <div className={`ml-[7px] flex h-6 w-[242px] gap-px overflow-hidden rounded-[4px] ${menuText}`}>
        <div className={pb}><Icon><circle cx="9" cy="10.500" r="6.500" /><path d="M9 4V1M6.500 1h5M9 7v4h3M14.500 4l2 1.500" strokeWidth="1.500" /></Icon></div>
        <div className="flex w-[111px] items-center justify-between bg-[#545454] pl-[19px] pr-[19px]"><span>Start</span><span>1</span></div>
        <div className="flex flex-1 items-center justify-between bg-[#545454] pl-[19px] pr-[17px]"><span>End</span><span>250</span></div>
      </div>
    </div>
    <div className="flex h-[25px] items-center pt-1 text-[14px] text-[#a8a8a8]">
      <div className="ml-[42px] flex h-[21px] w-[30px] items-center justify-center rounded-[4px] bg-[#4772b3] text-white">1</div>
      <div className="ml-[9.500px] flex">
        {frames.map((f) => (
          <div key={f} className="w-[58.940px] shrink-0 text-center">{f}</div>
        ))}
      </div>
    </div>
    <div className="flex h-[11px] shrink-0 items-center">
      <ChevRight className="ml-px h-[10px] w-[6px] text-[#aaa]" />
      <div className="ml-[3px] flex h-[11px] w-[1563px] items-center justify-between rounded-full bg-[#545454] px-px">
        <div className="h-[9px] w-[9px] rounded-full border border-[#666] bg-[#303030]" />
        <div className="h-[9px] w-[9px] rounded-full border border-[#666] bg-[#303030]" />
      </div>
      <ChevRight className="ml-[3px] h-[10px] w-[6px] rotate-180 text-[#aaa]" />
    </div>
    <div className="flex h-[3px] pl-[57px]"><div className="h-full w-[2px] bg-[#4772b3]" /></div>
  </div>
);

/* ---------- outliner ---------- */
const rowText = "pt-px text-[13.75px] leading-none text-[#c8c8c8] whitespace-nowrap";
const badge = "flex h-[23px] w-[25px] items-center justify-center rounded-[5px]";
type Obj = { name: string; textW: string; icon: React.ReactNode; data: React.ReactNode; left?: React.ReactNode; active?: boolean };
const LightIcon = (
  <Icon w={17} h={20} vb="0 0 17 20" className="text-[#c88551]">
    <path d="M8.500.5a7 7 0 0 0-4 12.800V15h8v-1.700a7 7 0 0 0-4-12.800z" fill="currentColor" stroke="none" />
    <path d="M5.500 7v2h2l1-1.500 1 1.500h2V7M7.500 9v4M9.500 9v4" stroke="#282828" /><path d="M4.500 16.800h8M6.500 19h4" />
  </Icon>
);
const dot = <div className="h-[5px] w-[5px] rounded-full bg-white" />;
const objs: Obj[] = [
  { name: "Camera", textW: "w-[76px]", icon: <span className="text-[#c88551]"><MovieCam filled /></span>, data: <div className={`${badge} bg-[#4d5a56] text-[#0eb38a]`}><MovieCam /></div> },
  {
    name: "Cube.004", textW: "w-[89px]", left: dot, icon: <ObjTri />,
    data: (
      <div className="flex items-center text-[#10b58c]">
        <div className={badge}><MeshData /></div>
        <div className="ml-[3px] flex"><ObjTri /></div>
        <span className="-ml-[2px] mt-[10px] text-[8px] leading-none text-[#ddd]">4</span>
      </div>
    ),
  },
  { name: "Cube.005", textW: "w-[89px]", left: dot, icon: <ObjTri />, data: <div className={`${badge} text-[#10b58c]`}><MeshData /></div> },
  { name: "Cube.006", textW: "w-[89px]", left: <span className="text-[#e6e6e6]"><EditMesh /></span>, icon: <ObjTri />, active: true, data: <div className={`${badge} bg-[#1f4a40] text-[#10b58c]`}><MeshData /></div> },
  {
    name: "Light", textW: "w-[57px]", icon: LightIcon,
    data: <div className={`${badge} text-[#10b58c]`}><Icon w={19} vb="0 0 18 20" h={21}><path d="M5 15.500A8 8 0 1 1 13 15.500" /><circle cx="9" cy="9" r="1.800" /><path d="M9 12v8" strokeDasharray="2.500 1.500" /></Icon></div>,
  },
];
const rowBg = (i: number) => (i % 2 === 0 ? "bg-[#282828]" : "bg-[#2b2b2b]");

const Outliner = () => (
  <div className="flex h-[297px] w-[332px] flex-col overflow-hidden rounded-[7px] border border-[#3a3a3a] bg-[#282828] text-[#e6e6e6]">
    <div className="flex h-8 shrink-0 items-center pb-[2px] pl-[9px]">
      <div className={`${btn} w-10 gap-[3px] pl-[5px]`}>
        <Icon><path d="M3 4v11h4M3 8.500h5" /><path d="M0 0h6v4H0zM8 6.500h9v4H8zM8 13h9v4.500H8z" fill="currentColor" stroke="none" /></Icon>
        <Chev />
      </div>
      <div className={`${btn} ml-[6px] w-10 gap-[3px] pl-[5px]`}><LayersIcon /><Chev /></div>
      <div className="ml-[19px] flex h-6 w-[148px] items-center rounded-[4px] border border-[#3d3d3d] bg-[#1d1d1d] pl-[5px] text-[13.75px] text-[#777]">
        <span className="text-[#d0d0d0]"><SearchIcon /></span>
        <span className="ml-[9px] pb-px">Search</span>
      </div>
      <div className={`${btn} ml-[19px] w-10 gap-[5px] pl-[3px]`}>
        <Icon><path d="M1 1h16l-6 7.500V14l-4 3V8.500z" /></Icon>
        <Chev />
      </div>
    </div>
    <div className={`flex h-[25px] shrink-0 items-center pl-7 text-[#d8d8d8] ${rowBg(0)}`}>
      <ArchiveIcon />
      <span className={`ml-[9px] ${rowText}`}>Scene Collection</span>
    </div>
    <div className={`flex h-[25px] shrink-0 items-center pl-[30px] ${rowBg(1)}`}>
      <Chev className="h-[8px] w-[12px] text-[#bbb]" />
      <div className={`${badge} ml-[7px] bg-[#555]`}><ArchiveIcon /></div>
      <span className={`ml-[5px] w-[171px] ${rowText}`}>Collection</span>
      <Icon w={13} vb="0 0 13 13"><rect width="13" height="13" rx="1" fill="currentColor" stroke="none" /><path d="M3 6.500l2.700 2.800 5-5.800" stroke="#222" strokeWidth="1.900" /></Icon>
      <div className="ml-[10px] flex items-center gap-2"><Eye /><RenderCam /></div>
    </div>
    {objs.map((o, i) => (
      <div key={o.name} className={`flex h-[25px] shrink-0 items-center ${rowBg(i)} ${o.active ? "!bg-[#303030]" : ""}`}>
        <div className="flex w-[22px] items-center justify-center">{o.left}</div>
        <div className={`ml-[12px] h-full w-px ${i === 0 ? "mt-[10px]" : ""} ${i === 4 ? "mb-[12px]" : ""} bg-[#666]`} />
        <ChevRight className="ml-[23px] text-[#bbb]" />
        <div className={`${badge} ml-[9px] ${o.active ? "bg-[#555]" : ""}`}>{o.icon}</div>
        <span className={`ml-[5px] shrink-0 ${o.textW} ${rowText}`}>{o.name}</span>
        {o.data}
        <div className="ml-auto mr-[14px] flex items-center gap-2"><Eye /><RenderCam /></div>
      </div>
    ))}
    {[5, 6, 7, 8].map((i) => <div key={i} className={`h-[25px] ${rowBg(i)}`} />)}
  </div>
);

/* ---------- properties ---------- */
const PropTabs = () => (
  <div className="flex w-[34px] shrink-0 flex-col items-center bg-[#1d1d1d] pt-[10px] text-[#b5b5b5] [&>div]:flex [&>div]:h-[35px] [&>div]:w-full [&>div]:shrink-0 [&>div]:items-center [&>div]:justify-center">
    <div>
      <Icon><path d="M3.500 0v9" /><path d="M1 10h5v3l1 5H0l1-5z" fill="currentColor" stroke="none" /><path d="M10.500 1v4.500l3 2 3-2V1" strokeWidth="2" /><path d="M13.500 7v9" strokeWidth="4" strokeLinecap="round" /></Icon>
    </div>
    <span className="h-[9px] w-full shrink-0" />
    <div><Icon><path d="M0 5h13v11.500H0z" fill="currentColor" stroke="none" /><path d="M3 4.500l2-3h5l2 3M15 6h2v10h-2z" /><path d="M2 8h9M2 10.500h9M2 13h9" stroke="#333" /></Icon></div>
    <div><Icon><path d="M0 1h18v7H0zM3.500 9h11v9h-11z" fill="currentColor" stroke="none" /><path d="M5.500 16l3-5 4 5z" fill="#222" stroke="none" /></Icon></div>
    <div><LayersIcon /></div>
    <div><SceneIcon /></div>
    <div className="text-[#b5545b]"><Icon><circle cx="9" cy="9" r="7.800" /><path d="M2 6l3-4 5-.5 1 2.500-2.500 1.500 1 2L7 9.500l1.500 2 2.500-1 3 2-2 4-2.500.5-1-3-2.500-2L3 8z" fill="currentColor" stroke="none" /><path d="M13 4l4.500-3.500M.5 17.500L4 14" /></Icon></div>
    <span className="h-[9px] w-full shrink-0" />
    <div><Icon><path d="M1 1.500h16v4H1zM2 5.500h14v11H2zM7 9.500h4" strokeWidth="1.600" /></Icon></div>
    <span className="h-[9px] w-full shrink-0" />
    <div className="text-[#c88551]"><Icon><rect x="4" y="4" width="10" height="10" fill="currentColor" stroke="none" /><path d="M.8 5V.8H5M13 .8h4.200V5M17.200 13v4.200H13M5 17.200H.8V13" className="opacity-60" /></Icon></div>
    <div className="text-[#5c82cf]"><Wrench /></div>
    <div className="text-[#5c82cf]"><Icon><circle cx="3.500" cy="3.500" r="3.300" fill="currentColor" stroke="none" /><path d="M4 3.500h12M3.500 4v12M4 4l11 11" className="opacity-70" /><circle cx="16" cy="3.500" r="1.800" fill="currentColor" stroke="none" /><circle cx="3.500" cy="16" r="1.800" fill="currentColor" stroke="none" /><circle cx="15.500" cy="15.500" r="2.300" fill="currentColor" stroke="none" /></Icon></div>
    <div className="text-[#5c82cf]"><Icon><path d="M12 2A7.800 7.800 0 1 0 16.500 8" className="opacity-70" /><circle cx="9" cy="9.500" r="3.300" fill="currentColor" stroke="none" /><circle cx="15.500" cy="3" r="2.300" fill="currentColor" stroke="none" className="opacity-70" /></Icon></div>
    <div className="text-[#5c82cf]"><Icon><path d="M1.500 8l10-6.500a3.200 3.200 0 0 1 5.500 3L13.500 14A6.500 6.500 0 1 1 1.500 8z" /><circle cx="7.500" cy="11" r="3.200" strokeWidth="2" /><circle cx="14" cy="4" r=".8" /></Icon></div>
    <div className="text-[#10b58c]"><MeshData /></div>
    <div className="rounded-l-[4px] bg-[#303030] text-[#d4656e]"><MaterialIcon /></div>
  </div>
);

const Grip = ({ className = "" }: { className?: string }) => (
  <div className={`grid grid-cols-4 gap-x-[2.500px] gap-y-[3px] ${className}`}>
    {Array.from({ length: 8 }, (_, i) => <div key={i} className="h-[1.500px] w-[2px] bg-[#9a9a9a]" />)}
  </div>
);

const gbtn = "flex items-center justify-center bg-[#545454] text-[#e6e6e6]";
type Field = { label: string; dotc: string; mt: string; kind: "menu" | "color" | "value"; text?: string; fill?: string };
const fields: Field[] = [
  { label: "Surface", dotc: "bg-[#63c763]", mt: "mt-0", kind: "menu", text: "Principled BSDF" },
  { label: "Base Color", dotc: "bg-[#c7c729]", mt: "mt-5", kind: "color" },
  { label: "Metallic", dotc: "bg-[#a1a1a1]", mt: "mt-[7px]", kind: "value", text: "0.000", fill: "w-0" },
  { label: "Roughness", dotc: "bg-[#a1a1a1]", mt: "mt-[7px]", kind: "value", text: "0.500", fill: "w-[53px]" },
  { label: "IOR", dotc: "bg-[#a1a1a1]", mt: "mt-[7px]", kind: "value", text: "1.500", fill: "w-0" },
  { label: "Alpha", dotc: "bg-[#a1a1a1]", mt: "mt-[7px]", kind: "value", text: "1.000", fill: "w-full" },
  { label: "Normal", dotc: "bg-[#6363c7]", mt: "mt-[7px]", kind: "menu", text: "Default" },
];

const Properties = () => (
  <div className="mt-[3px] flex h-[629px] w-[332px] flex-col overflow-hidden rounded-[7px] border border-[#3a3a3a] bg-[#303030] text-[#e6e6e6]">
    <div className="flex h-[30px] shrink-0 items-center pb-px pl-[9px]">
      <div className={`${btn} w-10 gap-1 pl-[5px]`}>
        <Icon><rect x="0.700" y="1" width="16.500" height="6.500" rx="3.200" /><rect x="0.700" y="10.500" width="16.500" height="6.500" rx="3.200" /><path d="M9 1H4a3.200 3.200 0 0 0 0 6.500h5zM8 10.500h6a3.200 3.200 0 0 1 0 6.500H8z" fill="currentColor" /></Icon>
        <Chev />
      </div>
      <div className="ml-[36px] flex h-6 w-[147px] items-center rounded-[4px] border border-[#3d3d3d] bg-[#1d1d1d] pl-[5px] text-[13.75px] text-[#777]">
        <span className="text-[#d0d0d0]"><SearchIcon /></span>
        <span className="ml-[9px] pb-px">Search</span>
      </div>
      <div className={`${btn} ml-[63px] w-6 justify-center`}><Chev /></div>
    </div>
    <div className="flex min-h-0 flex-1">
      <PropTabs />
      <div className="w-[287px] shrink-0 overflow-hidden pl-[10px]">
        <div className={`flex h-[56px] items-start pl-[3px] pt-3 ${menuText}`}>
          <div className="flex h-[22px] items-center">
            <Icon><rect x="4" y="4" width="10" height="10" fill="currentColor" stroke="none" /><path d="M.8 5V.8H5M13 .8h4.200V5M17.200 13v4.200H13M5 17.200H.8V13" className="opacity-60" /></Icon>
            <span className="ml-[11px] w-[73px]">Cube.0...</span>
            <ChevRight />
            <MaterialIcon className="ml-3" />
            <span className="ml-[11px] w-[102px]">Material.0...</span>
            <Pin />
          </div>
        </div>
        <div className="flex">
          <div className="flex h-[148px] w-[242px] flex-col rounded-[5px] border border-[#3d3d3d] bg-[#242424] px-[6px] pt-[5px]">
            <div className="flex h-[23px] items-center rounded-[4px] bg-[#4772b3] pl-[10px] text-[13.75px] text-white">
              <div className="h-[17px] w-[17px] rounded-full bg-[radial-gradient(circle_at_35%_45%,#999,#1a1a1a_35%,#050505)]" />
              <span className="ml-[10px]">Material.002</span>
            </div>
            <div className="mt-[2px] flex h-[23px] items-center pl-[10px] text-[13.75px] text-[#c8c8c8]">
              <div className="h-[17px] w-[16px] rounded-full bg-[radial-gradient(circle_at_35%_45%,#e2dd9a,#cfc44e_45%,#6b6210)]" />
              <span className="ml-[11px]">Material.003</span>
            </div>
            <div className="mt-auto flex items-center pb-2">
              <div className="ml-[7px] h-0 w-0 border-y-[4px] border-l-[8px] border-y-transparent border-l-[#bbb]" />
              <Grip className="ml-[104px]" />
            </div>
          </div>
          <div className="ml-[10px] flex w-6 flex-col">
            <div className="flex h-12 flex-col gap-px overflow-hidden rounded-[4px]">
              <div className={`${gbtn} flex-1`}><Icon w={12} vb="0 0 12 12"><path d="M6 0v12M0 6h12" /></Icon></div>
              <div className={`${gbtn} flex-1`}><Icon w={12} vb="0 0 12 12"><path d="M0 6h12" /></Icon></div>
            </div>
            <div className={`${btn} mt-2 justify-center`}><Chev className="h-2 w-3" /></div>
            <div className="mt-[9px] flex h-12 flex-col gap-px overflow-hidden rounded-[4px]">
              <div className={`${gbtn} flex-1`}><Icon w={10} vb="0 0 10 8" h={8}><path d="M5 0l5 8H0z" fill="currentColor" stroke="none" /></Icon></div>
              <div className={`${gbtn} flex-1`}><Icon w={10} vb="0 0 10 8" h={8}><path d="M5 8l5-8H0z" fill="currentColor" stroke="none" /></Icon></div>
            </div>
          </div>
        </div>
        <div className={`mt-[7px] flex ${menuText}`}>
          <div className="flex h-6 w-[227px] overflow-hidden rounded-[4px] border border-[#3d3d3d] bg-[#282828]">
            <div className="flex w-[39px] items-center gap-1 pl-1"><MaterialIcon /><Chev /></div>
            <div className="flex w-[82px] items-center bg-[#1d1d1d] pl-[9px]">Material...</div>
            <div className="flex w-[30px] items-center justify-center bg-[#3c3c3c] text-[#888]">2</div>
            <div className={`${gbtn} w-6`}><Icon className="opacity-50"><path d="M9 1l7.500 2.500V9c0 4-3 6.500-7.500 8.300C4.500 15.500 1.500 13 1.500 9V3.500z" /></Icon></div>
            <div className={`${gbtn} ml-px w-6`}><Copy /></div>
            <div className={`${gbtn} ml-px w-6`}><Cross /></div>
          </div>
          <div className={`${btn} ml-[10px] w-[39px] gap-[3px] pl-[5px]`}><MeshData /><Chev /></div>
        </div>
        <div className={`mt-[7px] flex h-6 w-[276px] gap-px overflow-hidden rounded-[4px] ${menuText}`}>
          <div className={`${gbtn} w-[91px]`}>Assign</div>
          <div className={`${gbtn} w-[91px]`}>Select</div>
          <div className={`${gbtn} flex-1`}>Deselect</div>
        </div>
        <div className={`mt-3 flex h-[31px] items-center rounded-[5px] bg-[#3d3d3d] pl-[13px] ${menuText}`}>
          <ChevRight className="text-[#aaa]" />
          <span className="ml-[7px] flex-1">Preview</span>
          <Grip className="mr-[8px]" />
        </div>
        <div className="mt-[2px] h-[300px] rounded-t-[5px] bg-[#3d3d3d]">
          <div className={`flex h-[31px] items-center pl-[10px] ${menuText}`}>
            <Chev className="h-2 w-3 text-[#aaa]" />
            <span className="ml-[5px] flex-1">Surface</span>
            <Grip className="mr-[8px]" />
          </div>
          <div className="mt-[11px]">
            {fields.map((f) => (
              <div key={f.label} className={`flex h-6 items-center ${f.mt} ${menuText}`}>
                <div className="w-[97px] text-right">{f.label}</div>
                <div className="ml-3 flex h-[23px] w-[132px] overflow-hidden rounded-[4px] bg-[#282828]">
                  <div className="flex w-6 shrink-0 items-center justify-center">
                    <div className={`h-[10px] w-[10px] rounded-full border border-black ${f.dotc}`} />
                  </div>
                  {f.kind === "menu" && <div className="flex items-center pl-[2px]">{f.text}</div>}
                  {f.kind === "color" && <div className="flex-1 bg-black" />}
                  {f.kind === "value" && (
                    <div className="grid flex-1 items-center bg-[#545454]">
                      <div className={`col-start-1 row-start-1 h-full bg-[#4772b3] ${f.fill}`} />
                      <div className="col-start-1 row-start-1 text-center">{f.text}</div>
                    </div>
                  )}
                </div>
                {f.kind !== "menu" && <div className="ml-[11px] h-[5px] w-[5px] rounded-full bg-[#e6e6e6]" />}
              </div>
            ))}
            <div className={`mt-[7px] flex h-5 items-center pl-[20px] ${menuText}`}>
              <ChevRight className="h-[10px] w-[6px]" />
              <span className="ml-[16px]">Diffuse</span>
            </div>
          </div>
        </div>
      </div>
      <div className="ml-px mt-[12px] h-[221px] w-[5px] rounded-full bg-[#464646]" />
    </div>
  </div>
);

/* ---------- status bar ---------- */
const Mouse = ({ part }: { part: "l" | "m" | "r" }) => (
  <Icon w={16} h={21} vb="0 0 16 21" className="text-[#989898]">
    <rect x="1" y="1" width="14" height="19" rx="4.500" strokeWidth="1.300" />
    {part === "l" && <path d="M0 0h8v11H0z" stroke="none" fill="#181818" />}
    {part === "r" && <path d="M8 0h8v11H8z" stroke="none" fill="#181818" />}
    {part === "l" && <path d="M0 5a5 5 0 0 1 5-5h2v10H0z" fill="currentColor" stroke="none" />}
    {part === "r" && <path d="M9 0h2a5 5 0 0 1 5 5v5H9z" fill="currentColor" stroke="none" />}
    {part === "m" && <rect x="5.500" y="3.500" width="5" height="9" rx="1.500" fill="currentColor" stroke="none" />}
  </Icon>
);
const StatusBar = () => (
  <div className="flex h-7 items-center bg-[#181818] pl-3 text-[13.75px] text-[#989898]">
    <Mouse part="l" /><span className="ml-[5px] w-[54px]">Select</span>
    <Mouse part="m" /><span className="ml-[5px] w-[90px] whitespace-nowrap">Rotate View</span>
    <Mouse part="r" /><span className="ml-[5px]">Call Menu</span>
    <div className="ml-auto flex items-center pr-[15px]">
      <Icon><circle cx="9.500" cy="10" r="7" /><ellipse cx="9.500" cy="10" rx="3" ry="7" /><path d="M2.500 8h14M2.500 12.500h14M1 1l16 16" /></Icon>
      <div className="ml-[10px] mr-[7px] h-[17px] w-px bg-[#777]" />
      <span>4.3.2</span>
    </div>
  </div>
);

/* ---------- windows taskbar ---------- */
const obsBlade = "M14.500 14.500c-4.500-.5-6-5.500-2.500-9.500";
const apps: { id: string; icon: React.ReactNode; ind: boolean; active?: boolean }[] = [
  {
    id: "taskview", ind: false,
    icon: <svg width="32" height="30" viewBox="0 0 32 30"><rect x="1" y="10" width="22" height="18" rx="2" fill="#666" /><rect x="8" y="1" width="23" height="20" rx="2" fill="#f3f3f3" /><rect x="8" y="10" width="15" height="11" fill="#bdbdbd" /></svg>,
  },
  {
    id: "copilot", ind: true,
    icon: (
      <svg width="30" height="28" viewBox="0 0 30 28">
        <defs>
          <linearGradient id="cpa" x1="0" y1="0" x2="0" y2="1"><stop offset="0" stopColor="#1b6fe0" /><stop offset=".45" stopColor="#28b6d8" /><stop offset="1" stopColor="#e8d02c" /></linearGradient>
          <linearGradient id="cpb" x1="1" y1="0" x2="0" y2="1"><stop offset="0" stopColor="#8c5be8" /><stop offset=".5" stopColor="#e8649a" /><stop offset="1" stopColor="#f89a4a" /></linearGradient>
        </defs>
        <path d="M8 1h10c2 0 3 1 3.500 3l.5 2h-4c-2 0-3 1-3.500 3l-3 10c-.6 2-1.500 3-3.500 3H5c-3 0-5-2.500-4-6L4 4.500C4.600 2 6 1 8 1z" fill="url(#cpa)" />
        <path d="M22 27H12c-2 0-3-1-3.500-3L8 22h4c2 0 3-1 3.500-3l3-10c.6-2 1.500-3 3.500-3h3c3 0 5 2.500 4 6l-3 11.500c-.6 2.500-2 3.500-4 3.500z" fill="url(#cpb)" />
        <path d="M18 1c2 0 3 1 3.500 3l.5 2h-4l-3-5z" fill="#1a3fae" />
      </svg>
    ),
  },
  {
    id: "edge", ind: true,
    icon: (
      <svg width="30" height="30" viewBox="0 0 30 30">
        <defs><linearGradient id="eg" x1="0" y1="0" x2="1" y2=".4"><stop offset="0" stopColor="#1e9de6" /><stop offset=".55" stopColor="#2fc3d3" /><stop offset="1" stopColor="#6ee04a" /></linearGradient></defs>
        <circle cx="15" cy="15" r="14.500" fill="#1268bd" />
        <path d="M.6 14C1.500 5.500 8 .5 15.500.5 24 .5 29.500 6.500 29.500 13c0 4-3 7-7.500 7-3 0-5-1-5-2 0-.8 1.500-1.500 1.500-4 0-3-3-5.500-7-5.500C6 8.500 1.500 11 .6 14z" fill="url(#eg)" />
        <path d="M12.500 13c-3 5 0 12.500 7 13.500 3 .4 5.500-.6 7.500-2-2.500 3.500-7 5.500-12 5C8 28 7 17 12.500 13z" fill="#0c4a94" />
        <path d="M29 19c-1.500 2-4 2.500-7 2.500-4 0-6-2-5.500-4.500.3 2 4 3 7 2.500 2.500-.3 5-1.500 6-4z" fill="#1d2233" />
      </svg>
    ),
  },
  {
    id: "explorer", ind: true,
    icon: <svg width="32" height="28" viewBox="0 0 32 28"><path d="M1 3c0-1 1-2 2-2h8l3 3h15c1 0 2 1 2 2v6H1z" fill="#e8a317" /><rect x="1" y="5" width="30" height="22" rx="2" fill="#ffd04f" /><path d="M6 27v-4c0-2 1.500-3 3-3h14c1.500 0 3 1 3 3v4z" fill="#1173c9" /><path d="M11 23.500h10" stroke="#0b4f94" strokeWidth="1.500" /></svg>,
  },
  {
    id: "vscode", ind: true,
    icon: <svg width="30" height="30" viewBox="0 0 30 30"><path d="M21.500 1L9 13 3.500 9 1 10.500v9L3.500 21 9 17l12.500 12" fill="#0a71c2" /><path d="M21.500 9L12 15l9.500 6.500z" fill="#1c2033" /><path d="M1 10.500l20.500 18.500V21L3.500 9z" fill="#0f86d8" /><path d="M21.500.5l7.500 3.500v22l-7.500 3.500z" fill="#28a6f2" /></svg>,
  },
  {
    id: "discord", ind: false,
    icon: <svg width="30" height="30" viewBox="0 0 30 30"><circle cx="15" cy="15" r="14.500" fill="#5865f2" /><path d="M9.500 9.500C11 8.800 12.500 8.500 12.500 8.500l.7 1h3.600l.7-1s1.500.3 3 1c2 3 3 6.500 2.500 10-1.500 1.300-3.500 2-3.500 2l-1.200-1.800c-2 .6-4.600.6-6.600 0L10.500 21.500s-2-.7-3.500-2c-.5-3.500.5-7 2.500-10z" fill="#fff" /><ellipse cx="12" cy="15.500" rx="1.700" ry="1.900" fill="#5865f2" /><ellipse cx="18" cy="15.500" rx="1.700" ry="1.900" fill="#5865f2" /></svg>,
  },
  { id: "blender", ind: true, active: true, icon: <BlenderMark w={28} color="#ea7600" ring="#fff" eye="#265787" /> },
  {
    id: "paint", ind: true,
    icon: <svg width="30" height="30" viewBox="0 0 30 30"><path d="M17 1c7 0 12 5 11 13-1 7-6 14-12 14-5 0-3-7-7-8C4 19 1 19 1.500 14 2.500 6 10 1 17 1z" fill="#2cb1ee" /><circle cx="16" cy="6" r="2.500" fill="#f5b820" /><circle cx="8" cy="9.500" r="2.500" fill="#3fa33c" /><circle cx="6" cy="16" r="2.300" fill="#e25822" /><circle cx="16" cy="16" r="2.500" fill="#1b2335" /><path d="M19.500 9h5v8h-5z" fill="#e8c898" /><path d="M20.500 17h3l-.5 12h-2z" fill="#a5622a" /></svg>,
  },
  {
    id: "obs", ind: true,
    icon: (
      <svg width="29" height="29" viewBox="0 0 29 29" fill="none" stroke="#c9c9c9" strokeWidth="2.200">
        <circle cx="14.500" cy="14.500" r="13" fill="#1f1b20" stroke="#d8d8d8" strokeWidth="1.800" />
        <path d={obsBlade} />
        <path d={obsBlade} transform="rotate(120 14.500 14.500)" />
        <path d={obsBlade} transform="rotate(240 14.500 14.500)" />
      </svg>
    ),
  },
];

const Taskbar = () => (
  <div className="relative flex h-[60px] items-center border-t border-[#45464d] bg-[linear-gradient(90deg,#21222c_0,#1f2129_210px,#162443_290px,#152345_410px,#1e2232_520px,#1f2234_700px,#182545_840px,#1c2438_960px,#17243f_1100px,#1c2132_1240px,#1b2032_1560px,#1b2042_1760px,#1b2135_1850px,#1c2133_1920px)] font-['Open_Sans',sans-serif] text-white">
    <div className="flex w-[558px] items-center pl-6">
      <svg width="36" height="34" viewBox="0 0 36 34" className="overflow-visible">
        <defs><linearGradient id="cl" x1="0" y1="0" x2="0" y2="1"><stop offset="0" stopColor="#8db6ee" /><stop offset="1" stopColor="#dfe9f8" /></linearGradient></defs>
        <path d="M8 24.500a7 7 0 0 1-.5-13.800A9 9 0 0 1 24 9.500a7.500 7.500 0 0 1 0 15z" fill="url(#cl)" />
        <circle cx="25" cy="5" r="10" fill="#ff99a4" />
        <text x="25" y="9.500" textAnchor="middle" fontSize="12.500" fill="#222">1</text>
      </svg>
      <div className="ml-[3.500px] pb-px text-[14px] leading-5 tracking-[-0.100px]">
        <div>10°C</div>
        <div className="text-[#d0d0d4]">Berawan</div>
      </div>
    </div>
    <svg width="29" height="29" viewBox="0 0 29 29">
      <defs><linearGradient id="wn" x1="0" y1="0" x2="1" y2="1"><stop offset="0" stopColor="#8af0ff" /><stop offset="1" stopColor="#0a8ff5" /></linearGradient></defs>
      <path d="M0 0h14v14H0zM15 0h14v14H15zM0 15h14v14H0zM15 15h14v14H15z" fill="url(#wn)" />
    </svg>
    <div className="ml-4 flex h-10 w-[274px] items-center rounded-full border border-[#51546a] bg-[#41455a] pl-[14px] pr-[7px]">
      <svg width="20" height="20" viewBox="0 0 20 20" fill="none" stroke="#fff" strokeWidth="1.800"><circle cx="8" cy="8" r="6.500" /><path d="M12.500 13l5.500 5.500" /></svg>
      <span className="ml-[11px] flex-1 text-[16px] text-[#e8e8ec]">Search</span>
      <svg width="58" height="32" viewBox="0 0 58 32">
        <circle cx="28" cy="17" r="14" fill="#a9b4c6" fillOpacity=".5" />
        <path d="M2 12a5 5 0 0 1 8-3 5 5 0 0 1 9 3zM42 11c1-4 6-5 8-3 4-1 6 1 6 4z" fill="#7fb0d8" />
        <path d="M1 29c10-6 17-7 27-7s22 3 29 6c-8 3-48 4-56 1z" fill="#4f9b4a" />
        <path d="M10 25l5-10 6 10zM36 24l5-9 6 10z" fill="#e8793a" />
        <path d="M24.500 24l1.500-18h4l1.500 18z" fill="#f2eeee" /><path d="M25.800 8h4.400l.4 4h-5.200zM25.200 16h5.600l.4 4h-6.400z" fill="#c7383b" /><path d="M25.500 6L28 1l2.500 5z" fill="#c7383b" />
      </svg>
    </div>
    <div className="ml-1 flex">
      {apps.map((a) => (
        <div key={a.id} className="flex h-[59px] w-[55px] items-center justify-center pt-px">
          <div className={`flex h-[50px] w-[50px] flex-col items-center rounded-[5px] ${a.active ? "border border-[#363b4e] bg-[#2a2f42]" : ""}`}>
            <div className="flex h-[45px] items-center pt-[3px]">{a.icon}</div>
            {a.ind && <div className={a.active ? "h-[4px] w-5 rounded-full bg-[#f9805f]" : "h-[4px] w-[7px] rounded-full bg-[#9a9ca8]"} />}
          </div>
        </div>
      ))}
    </div>
    <div className="ml-auto flex items-center pr-6">
      <svg width="14" height="8" viewBox="0 0 14 8" fill="none" stroke="#fff" strokeWidth="1.500"><path d="M1 7l6-6 6 6" /></svg>
      <svg width="18" height="16" viewBox="0 0 18 16" fill="none" stroke="#fff" className="ml-[22px]"><path d="M1 0v16M17 0v16" strokeWidth="1.500" /><path d="M4.500 16V5.500L9 11l4.500-5.500V16" strokeWidth="2.400" /></svg>
      <svg width="18" height="16" viewBox="0 0 18 16" fill="none" stroke="#fff" strokeWidth="2" className="ml-[23px]"><path d="M0 4.500h18M0 11.500h18" /><path d="M12 1.500v6M6 8.500v6" strokeWidth="3" /></svg>
      <svg width="21" height="14" viewBox="0 0 21 14" className="ml-5"><path d="M5 14a4.500 4.500 0 0 1-.5-9A6 6 0 0 1 15.500 4 5 5 0 0 1 16 14z" fill="#a9acb6" /><path d="M3 14c-3-2-2-6 1-6.500 3-.5 5-1.500 8 0 3 1 8-1 9 3 0 2-2 3.500-4 3.500z" fill="#fff" /></svg>
      <svg width="20" height="16" viewBox="0 0 20 16" fill="none" stroke="#fff" strokeWidth="1.600" className="ml-5"><path d="M1 5.500a12.500 12.500 0 0 1 18 0M4 8.700a8.500 8.500 0 0 1 12 0M6.800 11.500a4.700 4.700 0 0 1 6.400 0" /><circle cx="10" cy="14" r="1.300" fill="#fff" stroke="none" /></svg>
      <svg width="20" height="16" viewBox="0 0 20 16" fill="none" stroke="#fff" strokeWidth="1.400" className="ml-[10px]"><path d="M1 5.500h3L8.500 1v14L4 10.500H1zM11 5a4.500 4.500 0 0 1 0 6" /><path d="M13.500 3a7.500 7.500 0 0 1 0 10M16 1a10.500 10.500 0 0 1 0 14" strokeOpacity=".35" /></svg>
      <svg width="20" height="17" viewBox="0 0 20 17" fill="none" stroke="#fff" strokeWidth="1.600" className="ml-[11px]"><path d="M7 3.500h8.500a1.500 1.500 0 0 1 1.500 1.500v9a1.500 1.500 0 0 1-1.500 1.500h-12A1.500 1.500 0 0 1 2 14V9" /><path d="M17 7.500h2v4h-2z" fill="#fff" /><path d="M6 6h8.500v7H4.500V9.500z" fill="#fff" stroke="none" /><path d="M3.500 0L.5 5h2l-1 4 4-5.500H3.500z" fill="#fff" stroke="none" /></svg>
      <div className="w-[81px] pb-px text-right text-[14.500px] leading-5">
        <div>8:56 AM</div>
        <div>3/8/2025</div>
      </div>
    </div>
  </div>
);

export default function App() {
  return (
    <div className="flex h-[1080px] w-[1920px] flex-col overflow-hidden bg-[#181818] font-[Inter,sans-serif]">
      <TitleBar />
      <MenuBar />
      <div className="flex h-[929px] bg-[#181818]">
        <div className="flex w-[1585px] flex-col">
          <Viewport />
          <Timeline />
        </div>
        <div className="ml-[3px] flex w-[332px] flex-col">
          <Outliner />
          <Properties />
        </div>
      </div>
      <StatusBar />
      <Taskbar />
    </div>
  );
}
